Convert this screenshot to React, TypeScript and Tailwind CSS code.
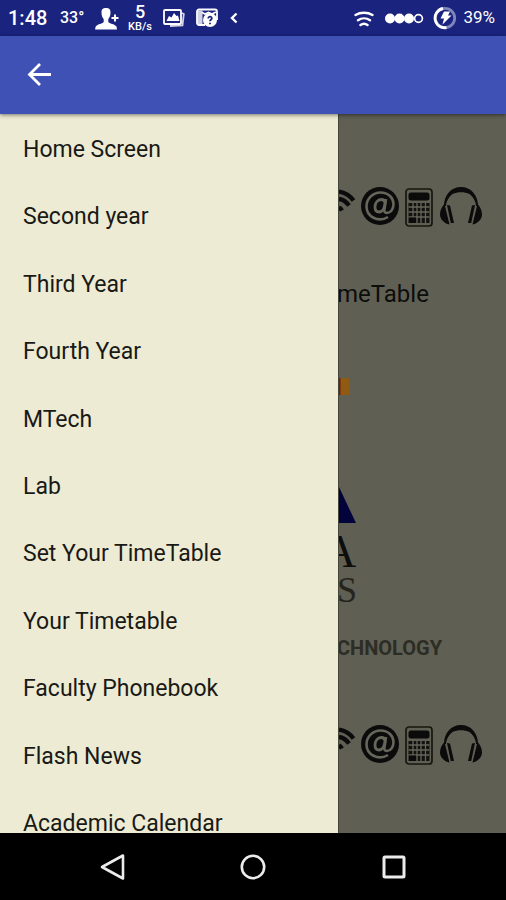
const menuItems = [
  'Home Screen',
  'Second year',
  'Third Year',
  'Fourth Year',
  'MTech',
  'Lab',
  'Set Your TimeTable',
  'Your Timetable',
  'Faculty Phonebook',
  'Flash News',
  'Academic Calendar',
];

function StatusBar() {
  return (
    <header className="flex h-9 shrink-0 items-center justify-between bg-[#1a237e] pl-2 pr-[11px] text-white">
      <div className="flex items-center">
        <span className="w-[52px] text-xl font-medium">1:48</span>
        <span className="w-[34px] text-base font-medium">33°</span>
        <svg className="mr-1 h-6 w-[26px]" viewBox="0 0 26 24" fill="currentColor" aria-hidden="true">
          <path d="M7.500 6.500C7.500 3 9 2 12 2s4.500 1 4.500 4.500c0 3-.8 5-2.200 6.500v3c.8 1.500 6.500 2 8.200 4.500l.5 3H1l.7-3C3.500 18 9 17.500 9.700 16v-3C8.200 11.500 7.500 9.500 7.500 6.500z" />
          <path d="M20 8.500h2v2.500h2.500v2H22v2.500h-2V13h-2.500v-2H20z" />
        </svg>
        <span className="flex w-8 flex-col items-center font-medium">
          <span className="text-lg leading-[18px]">5</span>
          <span className="text-[11px] leading-3">KB/s</span>
        </span>
        <svg className="ml-[6px] h-5 w-6" viewBox="0 0 24 20" fill="none" stroke="currentColor" strokeWidth="1.800" aria-hidden="true">
          <rect x="2" y="2" width="17" height="14" rx="1" />
          <path d="M4.500 13l2.500-5 2.500 1.500 2.500-4.500 2.500 3 1.500-.5 1.500 5.500z" fill="currentColor" stroke="none" />
          <path d="M20 5l1.800 1L20.500 17.500 8 18" opacity="0.8" />
        </svg>
        <svg className="ml-[9px] h-6 w-6" viewBox="0 0 24 24" fill="none" stroke="currentColor" strokeWidth="1.800" aria-hidden="true">
          <path d="M10 19H4a2 2 0 0 1-2-2V5.500a2 2 0 0 1 2-2h16a2 2 0 0 1 2 2V14" />
          <path d="M2.500 4.500h5V18.500h-5z" fill="currentColor" stroke="none" opacity="0.8" />
          <path d="M7 6.500l3 1.500 3.500-1.500L17 8l4-2" />
          <circle cx="15" cy="14" r="7" fill="currentColor" stroke="none" />
          <path d="M13.200 12.500c0-2.600 3.800-2.300 3.600 0-.1 1.300-1.800 1.300-1.800 2.800M15 16.700v1.500" stroke="#1a237e" />
        </svg>
        <svg className="ml-[9px] h-4 w-3" viewBox="0 0 12 16" fill="none" stroke="currentColor" strokeWidth="2.400" aria-hidden="true">
          <path d="M8.500 3.500L4 8l4.500 4.500" />
        </svg>
      </div>
      <div className="flex items-center">
        <svg className="h-5 w-5" viewBox="0 0 20 20" fill="none" stroke="currentColor" strokeWidth="2.400" strokeLinecap="round" aria-hidden="true">
          <path d="M1.500 7C6.500 4 13.500 4 18.500 7M4 12.200c3.500-2.500 8.500-2.500 12 0M6.500 17c2-1.500 5-1.500 7 0" />
        </svg>
        <svg className="ml-[10px] h-4 w-10" viewBox="0 0 40 16" aria-hidden="true">
          <circle cx="6" cy="8.500" r="5" fill="currentColor" />
          <circle cx="15.500" cy="8.500" r="5" fill="currentColor" />
          <circle cx="25" cy="8.500" r="5" fill="currentColor" />
          <circle cx="34.500" cy="8.500" r="3.900" fill="none" stroke="currentColor" strokeWidth="1.700" />
        </svg>
        <svg className="ml-[9px] mr-[6px] h-6 w-6" viewBox="0 0 24 24" fill="none" aria-hidden="true">
          <circle cx="12" cy="12" r="9.700" stroke="#7f86bb" strokeWidth="2.800" />
          <path d="M13.500 21.600A9.700 9.700 0 1 1 10 2.500" stroke="currentColor" strokeWidth="2.800" />
          <path d="M11 5.500h6L15 9.500h3.500l-9 9 1.500-6H7.500z" fill="currentColor" />
        </svg>
        <span className="text-[17px]">39%</span>
      </div>
    </header>
  );
}

function GadgetIcons() {
  return (
    <div className="flex h-10 shrink-0 items-center">
      <svg className="h-10 w-[18px]" viewBox="0 0 18 40" fill="none" stroke="#0b0b0b" strokeWidth="4.300" aria-hidden="true">
        <path d="M0 4.500C6 5.500 11 8.500 14.500 13.500M0 12c4.500.5 7.500 3 10 6.500M0 20.500c1.200.5 2.200 1.500 3 3" />
      </svg>
      <svg className="ml-1 h-10 w-[38px]" viewBox="0 0 38 40" fill="none" aria-hidden="true">
        <circle cx="19" cy="19" r="19" fill="#0b0b0b" />
        <path
          d="M27 30C17 36 5.500 29.500 5.500 19.500 5.500 12 11.500 5.500 19.500 5.500S32.500 11 32.500 17c0 5.500-3 9-6.500 9-2.500 0-3-1.500-2.500-4L25 12"
          stroke="#66665a"
          strokeWidth="2.600"
        />
        <path d="M24 16.500c0-2.500-1.500-4-3.800-4-3.700 0-6.200 3.500-6.200 7.500 0 3 1.500 5 4 5 3 0 5.500-3.500 6-8.500z" stroke="#66665a" strokeWidth="2.800" />
      </svg>
      <svg className="ml-[6px] h-10 w-7" viewBox="0 0 28 40" fill="none" aria-hidden="true">
        <rect x="1" y="2" width="26" height="37" rx="3" stroke="#17170f" strokeWidth="1.700" />
        <rect x="3.500" y="5.500" width="21" height="8" rx="2.500" fill="#0b0b0b" />
        <path d="M3.500 16h21v20h-21z" fill="#12120f" />
        <path d="M3.500 20h21M3.500 25h21M3.500 30h21M8 16v20M12 16v20M16 16v20M20.500 16v20" stroke="#66665a" strokeWidth="1.300" />
        <path d="M4 30.500h7V36H4z" fill="#0b0b0b" />
      </svg>
      <svg className="ml-[7px] h-10 w-[42px]" viewBox="0 0 42 40" fill="#0b0b0b" aria-hidden="true">
        <path d="M4 19C4 8 11 0 21 0s17 8 17 19h-1.800C35.500 14 33 9.500 29.500 7c-5-2.200-12-2.200-17 0C9 9.500 6.500 14 5.800 19z" />
        <path d="M5.500 16C2 19 0 23 0 27.500 0 32 4 36.500 9.500 37.500L5 19zM36.500 16c3.500 3 5.500 7 5.500 11.500 0 4.500-4 9-9.500 10L37 19z" />
        <path d="M7 18l3 .5L14 36h-3.200zM35 18l-3 .5L28 36h3.200z" />
      </svg>
    </div>
  );
}

function DimmedPage() {
  return (
    <section className="flex min-w-0 flex-1 flex-col overflow-hidden border-l border-[#45463a] bg-[#5f5f53] pt-[73px]">
      <GadgetIcons />
      <h1 className="-ml-[2px] mt-[51px] text-2xl leading-8 text-[#0d0d0b]">meTable</h1>
      <svg className="mt-[67px] h-[230px] w-5 shrink-0" viewBox="0 0 20 230" role="img" aria-label="Institute logo">
        <rect x="0" y="1" width="2" height="17" fill="#7a1710" />
        <rect x="1.500" y="1" width="8.500" height="17" fill="#8f5a12" />
        <path d="M-1 108L17 146H-1z" fill="#03033c" />
        <text x="-16" y="190" fontFamily="Liberation Serif, serif" fontSize="46" fill="#0d0d0b">A</text>
        <text x="-2" y="225" fontFamily="Liberation Serif, serif" fontSize="36" fill="#25251e">S</text>
      </svg>
      <p className="-ml-[2px] mt-[29px] text-xl leading-6 font-bold text-[#2d2d25]">CHNOLOGY</p>
      <div className="mt-[65px]">
        <GadgetIcons />
      </div>
    </section>
  );
}

function NavigationBar() {
  return (
    <footer className="grid h-[67px] shrink-0 grid-cols-3 bg-black px-[42px] text-[#ececec]">
      <button type="button" aria-label="Back" className="flex items-center justify-center">
        <svg className="h-7 w-7" viewBox="0 0 28 28" fill="none" stroke="currentColor" strokeWidth="2.600" strokeLinejoin="round">
          <path d="M25 2.500v23L4 14z" />
        </svg>
      </button>
      <button type="button" aria-label="Home" className="flex items-center justify-center">
        <svg className="h-7 w-7" viewBox="0 0 28 28" fill="none" stroke="currentColor" strokeWidth="2.600">
          <circle cx="14" cy="14" r="11.200" />
        </svg>
      </button>
      <button type="button" aria-label="Recent apps" className="flex items-center justify-center">
        <svg className="h-7 w-7" viewBox="0 0 28 28" fill="none" stroke="currentColor" strokeWidth="3" strokeLinejoin="round">
          <rect x="4" y="4" width="20" height="20" rx="1" />
        </svg>
      </button>
    </footer>
  );
}

export default function App() {
  return (
    <div className="flex h-screen flex-col overflow-hidden font-[Roboto,sans-serif]">
      <StatusBar />
      <div className="z-10 flex h-[78px] shrink-0 items-center bg-[#3f51b5] px-[23px] shadow-[0_1px_4px_rgba(0,0,0,0.5)]">
        <button type="button" aria-label="Close menu" className="text-white">
          <svg className="h-8 w-8" viewBox="0 0 32 32" fill="none" stroke="currentColor" strokeWidth="2.800">
            <path d="M28 15.500H6.500M17 5L6.500 15.500 17 26" />
          </svg>
        </button>
      </div>
      <main className="flex min-h-0 flex-1">
        <nav className="w-[338px] shrink-0 overflow-hidden bg-[#edebd3]">
          <ul className="grid h-[744px] auto-rows-fr pt-[2px]">
            {menuItems.map((item) => (
              <li key={item} className="flex">
                <a href="#" className="flex flex-1 items-center px-[23px] text-[23px] leading-7 text-[#191916]">
                  {item}
                </a>
              </li>
            ))}
          </ul>
        </nav>
        <DimmedPage />
      </main>
      <NavigationBar />
    </div>
  );
}
